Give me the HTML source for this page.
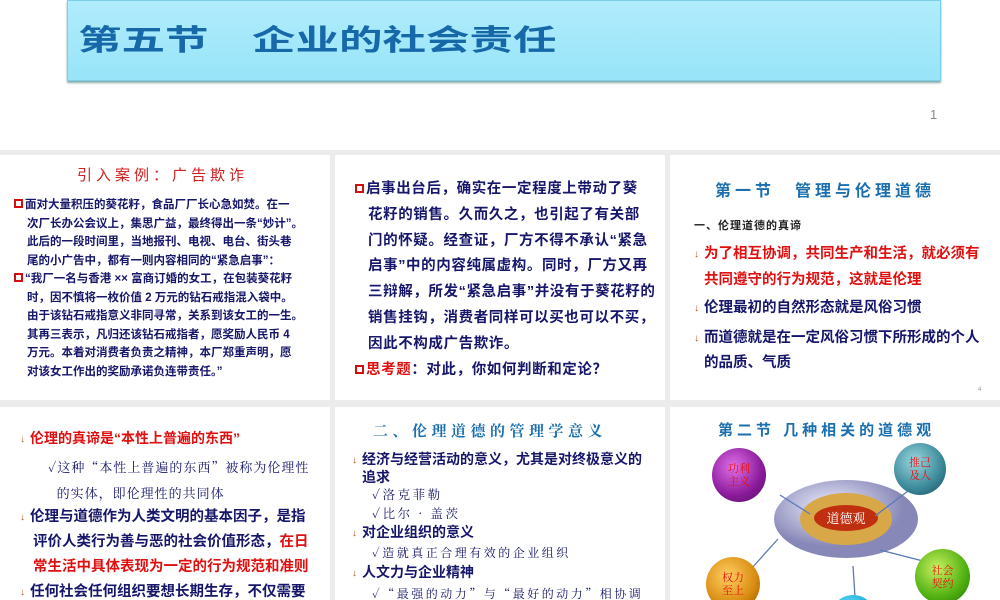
<!DOCTYPE html>
<html><head><meta charset="utf-8"><style>
*{margin:0;padding:0;box-sizing:border-box}
html,body{width:1000px;height:600px;overflow:hidden}
body{background:#ececec;position:relative;font-family:"Liberation Sans","Noto Sans CJK SC",sans-serif;}
.p{position:absolute;background:#fff;overflow:hidden}
.t{position:absolute;white-space:nowrap;font-weight:bold;color:#16166a}
.r{color:#e01010}
.box{display:inline-block;width:9px;height:9px;border:2px solid #d01010;margin-right:2px;vertical-align:0}
.arr{display:inline-block;width:10px;color:#c05010;font-size:10px;font-weight:bold;vertical-align:1px}
.chk{font-family:"Noto Serif CJK SC",serif;font-weight:normal;color:#16166a}
.ball{position:absolute;border-radius:50%;color:#e81010;font-family:"Noto Serif CJK SC",serif;font-size:11px;line-height:13px;text-align:center;display:flex;align-items:center;justify-content:center}
</style></head><body>
<div class="p" style="left:0;top:0;width:1000px;height:150px">
 <div style="position:absolute;left:67px;top:0;width:874px;height:81px;background:linear-gradient(#b0ecfc,#98e4f8);border:1px solid #7ccfe8;box-shadow:0 2px 2px #8aa"></div>
 <div class="t" style="left:78px;top:17px;font-size:29px;color:#1668a8;transform:scaleX(1.5);transform-origin:0 0">第五节　企业的社会责任</div>
 <div style="position:absolute;left:930px;top:107px;font-size:13px;color:#888">1</div>
</div>

<div class="p" style="left:0;top:155px;width:330px;height:245px">
 <div class="t" style="left:77px;top:9px;font-size:15px;color:#d02020;font-weight:normal;letter-spacing:4px">引入案例：广告欺诈</div>
 <div class="t" style="left:14px;top:41px;font-size:11.5px;line-height:18.5px">
  <div><span class="box"></span>面对大量积压的葵花籽，食品厂厂长心急如焚。在一</div>
  <div style="padding-left:13px">次厂长办公会议上，集思广益，最终得出一条“妙计”。</div>
  <div style="padding-left:13px">此后的一段时间里，当地报刊、电视、电台、街头巷</div>
  <div style="padding-left:13px">尾的小广告中，都有一则内容相同的“紧急启事”：</div>
  <div><span class="box"></span>“我厂一名与香港 ×× 富商订婚的女工，在包装葵花籽</div>
  <div style="padding-left:13px">时，因不慎将一枚价值 2 万元的钻石戒指混入袋中。</div>
  <div style="padding-left:13px">由于该钻石戒指意义非同寻常，关系到该女工的一生。</div>
  <div style="padding-left:13px">其再三表示，凡归还该钻石戒指者，愿奖励人民币 4</div>
  <div style="padding-left:13px">万元。本着对消费者负责之精神，本厂郑重声明，愿</div>
  <div style="padding-left:13px">对该女工作出的奖励承诺负连带责任。”</div>
 </div>
</div>

<div class="p" style="left:335px;top:155px;width:330px;height:245px">
 <div class="t" style="left:20px;top:22px;font-size:14.5px;line-height:25.8px;letter-spacing:0.6px">
  <div><span class="box"></span>启事出台后，确实在一定程度上带动了葵</div>
  <div style="padding-left:13px">花籽的销售。久而久之，也引起了有关部</div>
  <div style="padding-left:13px">门的怀疑。经查证，厂方不得不承认“紧急</div>
  <div style="padding-left:13px">启事”中的内容纯属虚构。同时，厂方又再</div>
  <div style="padding-left:13px">三辩解，所发“紧急启事”并没有于葵花籽的</div>
  <div style="padding-left:13px">销售挂钩，消费者同样可以买也可以不买，</div>
  <div style="padding-left:13px">因此不构成广告欺诈。</div>
  <div><span class="box"></span><span class="r">思考题</span>：对此，你如何判断和定论？</div>
 </div>
</div>

<div class="p" style="left:670px;top:155px;width:330px;height:245px">
 <div class="t" style="left:45px;top:22px;font-size:16px;color:#1b6fae;letter-spacing:4px">第一节　管理与伦理道德</div>
 <div class="t" style="left:24px;top:62px;font-size:11px;color:#222;letter-spacing:1px">一、伦理道德的真谛</div>
 <div class="t" style="left:24px;top:87px;font-size:14.5px;line-height:24.5px">
  <div class="r"><span class="arr">↓</span>为了相互协调，共同生产和生活，就必须有</div>
  <div class="r" style="padding-left:10px">共同遵守的行为规范，这就是伦理</div>
  <div style="margin-top:4px"><span class="arr">↓</span>伦理最初的自然形态就是风俗习惯</div>
  <div style="margin-top:4px"><span class="arr">↓</span>而道德就是在一定风俗习惯下所形成的个人</div>
  <div style="padding-left:10px">的品质、气质</div>
 </div>
 <div style="position:absolute;left:308px;top:232px;font-size:6px;color:#999">4</div>
</div>

<div class="p" style="left:0;top:407px;width:330px;height:193px">
 <div class="t" style="left:20px;top:21px;font-size:14px" ><span class="arr">↓</span><span class="r">伦理的真谛是“本性上普遍的东西”</span></div>
 <div class="t chk" style="left:48px;top:47px;font-size:13px;line-height:26px;letter-spacing:1px">✓这种“本性上普遍的东西”被称为伦理性<br>&nbsp;&nbsp;的实体，即伦理性的共同体</div>
 <div class="t" style="left:20px;top:98px;font-size:14.5px;line-height:25px">
  <div><span class="arr">↓</span>伦理与道德作为人类文明的基本因子，是指</div>
  <div style="padding-left:13px">评价人类行为善与恶的社会价值形态，<span class="r">在日</span></div>
  <div class="r" style="padding-left:13px">常生活中具体表现为一定的行为规范和准则</div>
  <div><span class="arr">↓</span>任何社会任何组织要想长期生存，不仅需要</div>
 </div>
</div>

<div class="p" style="left:335px;top:407px;width:330px;height:193px">
 <div class="t" style="left:38px;top:13px;font-size:15px;color:#1b6fae;letter-spacing:4.5px;font-family:'Noto Serif CJK SC',serif">二、伦理道德的管理学意义</div>
 <div class="t" style="left:17px;top:44px;font-size:14px;line-height:16px">
  <div><span class="arr">↓</span>经济与经营活动的意义，尤其是对终极意义的</div>
  <div style="padding-left:10px">追求</div>
  <div class="chk" style="padding-left:20px;line-height:19px;font-size:12.5px;letter-spacing:2.5px">✓洛克菲勒</div>
  <div class="chk" style="padding-left:20px;line-height:19px;font-size:12.5px;letter-spacing:2.5px">✓比尔 · 盖茨</div>
  <div style="line-height:19px"><span class="arr">↓</span>对企业组织的意义</div>
  <div class="chk" style="padding-left:20px;line-height:19px;font-size:12px;letter-spacing:2.5px">✓造就真正合理有效的企业组织</div>
  <div style="line-height:20px"><span class="arr">↓</span>人文力与企业精神</div>
  <div class="chk" style="padding-left:20px;line-height:19px;font-size:12px;letter-spacing:2.5px">✓“最强的动力”与“最好的动力”相协调</div>
 </div>
</div>

<div class="p" style="left:670px;top:407px;width:330px;height:193px">
 <div class="t" style="left:48px;top:12px;font-size:15px;color:#1b6fae;letter-spacing:4px">第二节 几种相关的道德观</div>
 <svg style="position:absolute;left:0;top:0" width="330" height="193">
  <defs>
   <radialGradient id="g1" cx="40%" cy="35%"><stop offset="0" stop-color="#f0f0ff"/><stop offset="1" stop-color="#8888b8"/></radialGradient>
  </defs>
  <ellipse cx="176" cy="112" rx="72" ry="39" fill="url(#g1)"/>
  <ellipse cx="176" cy="112" rx="46" ry="26" fill="#d8a848"/>
  <ellipse cx="176" cy="111" rx="32" ry="13" fill="#c03010"/>
  <text x="176" y="116" text-anchor="middle" font-size="13" fill="#fff" font-family="Noto Serif CJK SC,serif">道德观</text>
  <g stroke="#5a7ab8" stroke-width="1.3">
   <line x1="110" y1="88" x2="140" y2="107"/>
   <line x1="238" y1="84" x2="205" y2="109"/>
   <line x1="108" y1="132" x2="72" y2="172"/>
   <line x1="210" y1="143" x2="257" y2="155"/>
   <line x1="183" y1="159" x2="185" y2="190"/>
  </g>
 </svg>
 <div class="ball" style="left:42px;top:41px;width:54px;height:54px;background:radial-gradient(circle at 40% 35%,#e070e8,#8a1a9a 60%,#501060)">功利<br>主义</div>
 <div class="ball" style="left:224px;top:36px;width:52px;height:52px;background:radial-gradient(circle at 40% 35%,#9ad8e0,#3a8898 60%,#1a4858)">推己<br>及人</div>
 <div class="ball" style="left:36px;top:150px;width:54px;height:54px;background:radial-gradient(circle at 40% 35%,#ffd060,#d88a10 60%,#8a5000)">权力<br>至上</div>
 <div class="ball" style="left:245px;top:142px;width:55px;height:55px;background:radial-gradient(circle at 40% 35%,#c8f060,#50b010 60%,#207000)">社会<br>契约</div>
 <div class="ball" style="left:160px;top:188px;width:46px;height:46px;background:radial-gradient(circle at 40% 35%,#80e8ff,#10a8d8 60%,#006890)"></div>
</div>
</body></html>
